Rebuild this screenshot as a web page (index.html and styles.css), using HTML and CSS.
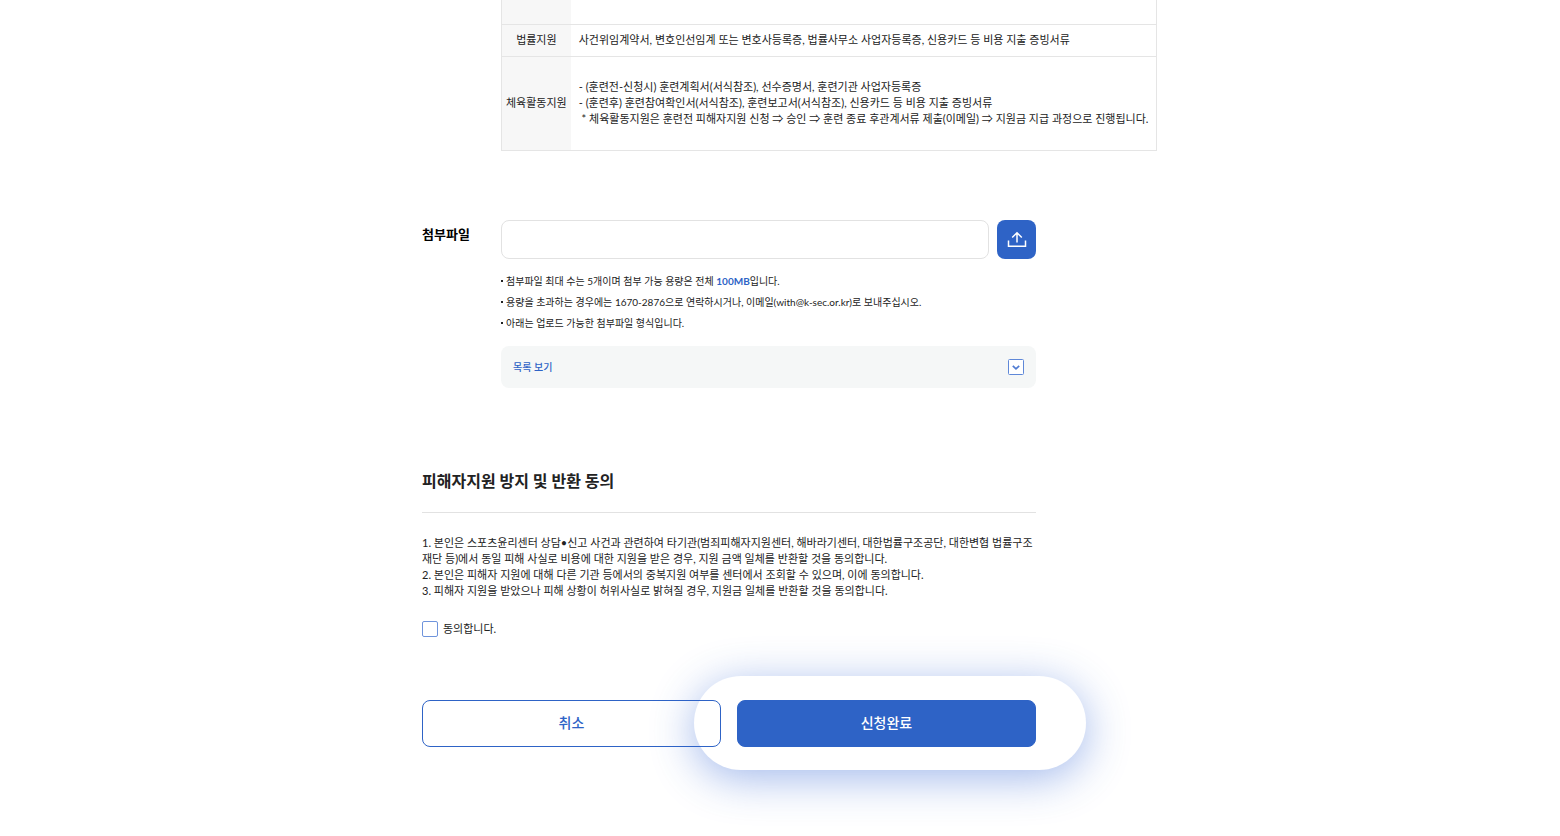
FILE: index.html
```
<!DOCTYPE html>
<html lang="ko">
<head>
  <meta charset="UTF-8">
  <meta name="viewport" content="width=device-width, initial-scale=1.0">
  <title>피해자지원 신청</title>
  <link rel="stylesheet" href="styles.css">
</head>
<body>
  <main class="container">
    <form class="apply-form">

      <div class="form-row">
        <div class="form-field">
          <table class="doc-table">
            <tbody>
              <tr class="row-cut">
                <th></th>
                <td></td>
              </tr>
              <tr>
                <th scope="row">법률지원</th>
                <td>사건위임계약서, 변호인선임계 또는 변호사등록증, 법률사무소 사업자등록증, 신용카드 등 비용 지출 증빙서류</td>
              </tr>
              <tr class="row-tall">
                <th scope="row">체육활동지원</th>
                <td>
                  - (훈련전-신청시) 훈련계획서(서식참조), 선수증명서, 훈련기관 사업자등록증<br>
                  - (훈련후) 훈련참여확인서(서식참조), 훈련보고서(서식참조), 신용카드 등 비용 지출 증빙서류<br>
                  &nbsp;* 체육활동지원은 훈련전 피해자지원 신청 ⇒ 승인 ⇒ 훈련 종료 후관계서류 제출(이메일) ⇒ 지원금 지급 과정으로 진행됩니다.
                </td>
              </tr>
            </tbody>
          </table>
        </div>
      </div>

      <div class="form-row attach">
        <label class="form-label" for="attachFile">첨부파일</label>
        <div class="form-field">
          <div class="file-box">
            <input type="text" id="attachFile" class="file-name" readonly>
            <button type="button" class="btn-upload" aria-label="파일 업로드">
              <svg width="20" height="18" viewBox="0 0 20 18" fill="none" stroke="#fff" stroke-width="1.5">
                <path d="M1.5 10.5V16.2H18.5V10.5"/>
                <path d="M10 12.5V3M5.2 7.5L10 2.8L14.8 7.5"/>
              </svg>
            </button>
          </div>
          <ul class="notes">
            <li>첨부파일 최대 수는 5개이며 첨부 가능 용량은 전체 <strong>100MB</strong>입니다.</li>
            <li>용량을 초과하는 경우에는 1670-2876으로 연락하시거나, 이메일(with@k-sec.or.kr)로 보내주십시오.</li>
            <li>아래는 업로드 가능한 첨부파일 형식입니다.</li>
          </ul>
          <button type="button" class="btn-list">
            <span>목록 보기</span>
            <svg width="16" height="16" viewBox="0 0 16 16" fill="none">
              <rect x="0.5" y="0.5" width="15" height="15" rx="1" fill="#fff" stroke="#5f88d8"/>
              <path d="M4.8 6.8L8 9.8L11.2 6.8" stroke="#4f7bd2" stroke-width="1.7"/>
            </svg>
          </button>
        </div>
      </div>

      <section class="agree">
        <h2 class="agree-title">피해자지원 방지 및 반환 동의</h2>
        <p class="agree-text">
          1. 본인은 스포츠윤리센터 상담•신고 사건과 관련하여 타기관(범죄피해자지원센터, 해바라기센터, 대한법률구조공단, 대한변협 법률구조<wbr>재단 등)에서 동일 피해 사실로 비용에 대한 지원을 받은 경우, 지원 금액 일체를 반환할 것을 동의합니다.<br>
          2. 본인은 피해자 지원에 대해 다른 기관 등에서의 중복지원 여부를 센터에서 조회할 수 있으며, 이에 동의합니다.<br>
          3. 피해자 지원을 받았으나 피해 상황이 허위사실로 밝혀질 경우, 지원금 일체를 반환할 것을 동의합니다.
        </p>
        <label class="agree-check">
          <input type="checkbox">
          <span>동의합니다.</span>
        </label>
      </section>

      <div class="btn-wrap">
        <button type="button" class="btn btn-cancel">취소</button>
        <button type="submit" class="btn btn-submit">신청완료</button>
      </div>

    </form>
  </main>
</body>
</html>
```
FILE: styles.css
```
* {
  box-sizing: border-box;
}

body {
  margin: 0;
  background: #fff;
  color: #222;
  font-family: Lato, "Noto Sans CJK KR", sans-serif;
  font-size: 11px;
  line-height: 16px;
}

button,
input {
  font-family: inherit;
}

button {
  cursor: pointer;
}

.container {
  max-width: 716px;
  margin: 0 auto;
  padding-bottom: 88px;
}

.apply-form {
  max-width: 614px;
}

.form-row {
  display: grid;
  grid-template-columns: 79px 1fr;
}

.form-field {
  grid-column: 2;
  min-width: 0;
}

.form-label {
  padding-top: 6px;
  color: #000;
  font-size: 13px;
  font-weight: 700;
}

/* document table */
.doc-table {
  border-collapse: collapse;
  white-space: nowrap;
}

.doc-table th,
.doc-table td {
  height: 32px;
  padding: 0 8px;
  border: 1px solid #e5e5e5;
  text-align: left;
}

.doc-table th {
  padding: 0 4px;
  border-right: 0;
  background: #f7f7f7;
  font-weight: 400;
  text-align: center;
}

.doc-table td {
  border-left: 0;
}

.doc-table .row-cut th,
.doc-table .row-cut td {
  height: 24px;
  border-top: 0;
}

.doc-table .row-tall th,
.doc-table .row-tall td {
  height: 94px;
}

/* attachment */
.attach {
  margin-top: 69px;
}

.file-box {
  display: flex;
  gap: 8px;
}

.file-name {
  flex: 1;
  min-width: 0;
  height: 39px;
  padding: 0 12px;
  border: 1px solid #e2e2e2;
  border-radius: 8px;
  outline: 0;
}

.btn-upload {
  display: flex;
  align-items: center;
  justify-content: center;
  width: 39px;
  height: 39px;
  padding: 0;
  border: 0;
  border-radius: 8px;
  background: #2e63c6;
}

.notes {
  margin: 12px 0 0;
  padding: 0;
  list-style: none;
  font-size: 10px;
  line-height: 21px;
}

.notes li {
  display: flex;
  align-items: center;
  white-space: pre;
}

.notes li::before {
  content: "";
  width: 2px;
  height: 2px;
  margin-right: 3px;
  background: #222;
}

.notes strong {
  color: #2e63c6;
  font-weight: 700;
}

.btn-list {
  display: flex;
  align-items: center;
  justify-content: space-between;
  width: 100%;
  height: 42px;
  margin-top: 12px;
  padding: 0 12px;
  border: 0;
  border-radius: 8px;
  background: #f5f7f7;
  color: #2e63c6;
  font-size: 10px;
  font-weight: 500;
}

/* agreement */
.agree {
  margin-top: 81px;
}

.agree-title {
  margin: 0;
  padding-bottom: 19px;
  border-bottom: 1px solid #e2e2e2;
  font-size: 16px;
  font-weight: 700;
  line-height: 24px;
}

.agree-text {
  margin: 22px 0;
}

.agree-check {
  display: inline-flex;
  align-items: center;
  gap: 5px;
}

.agree-check input {
  width: 16px;
  height: 16px;
  margin: 0;
  border: 1px solid #6f94dc;
  border-radius: 2px;
  background: #fff;
  appearance: none;
}

.agree-check input:checked {
  background: #2e63c6;
}

/* bottom buttons */
.btn-wrap {
  display: grid;
  grid-template-columns: 1fr 1fr;
  gap: 16px;
  margin-top: 59px;
}

.btn {
  height: 47px;
  padding: 0 0 2px;
  border: 1px solid #2e63c6;
  border-radius: 8px;
  font-size: 14px;
  font-weight: 500;
}

.btn-cancel {
  background: #fff;
  color: #2e63c6;
}

.btn-submit {
  position: relative;
  background: #2e63c6;
  color: #fff;
}

/* glow ring around the submit button */
.btn-submit::after {
  content: "";
  position: absolute;
  inset: -25px -51px -24px -44px;
  border-radius: 47px;
  box-shadow: 0 8px 44px rgba(46, 98, 210, 0.45);
  pointer-events: none;
}
```
